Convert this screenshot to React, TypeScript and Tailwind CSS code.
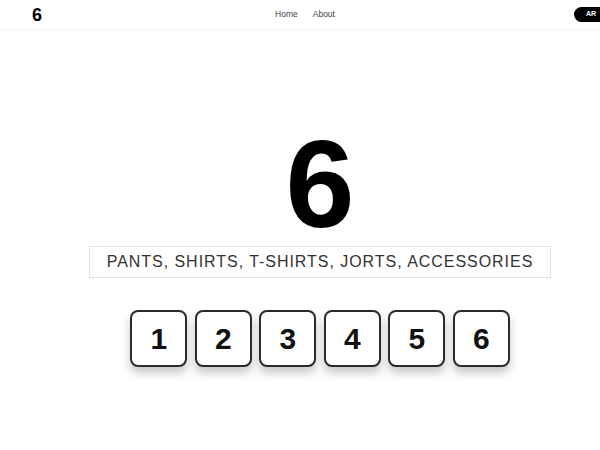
import React from "react";

export default function App() {
  const nums = [1, 2, 3, 4, 5, 6];
  return (
    <div className="w-[600px] h-[450px] overflow-hidden bg-white" style={{ fontFamily: '"Liberation Sans", Arial, sans-serif' }}>
      <div className="w-[640px]">
        <header className="h-[30px] border-b border-[#f1f1f1] flex items-center justify-between pl-[32px] pr-[32px]">
          <div className="text-[18px] font-bold text-black leading-none">6</div>
          <nav className="flex items-center gap-[15px] text-[8.5px] text-[#444] mr-[6px]">
            <span>Home</span>
            <span>About</span>
          </nav>
          <div className="h-[15px] w-[34px] rounded-full bg-black text-white text-[7px] font-bold flex items-center justify-center">AR</div>
        </header>
        <main className="flex flex-col items-center pt-[92px]">
          <div className="text-[124px] font-bold leading-none text-black">6</div>
          <div className="h-[32px] px-[17px] border border-[#e2e2e2] flex items-center text-[16px] tracking-[0.06em] text-[#333]">
            PANTS, SHIRTS, T-SHIRTS, JORTS, ACCESSORIES
          </div>
          <div className="flex gap-[7.5px] mt-[32px]">
            {nums.map((n) => (
              <div
                key={n}
                className="w-[57px] h-[57px] rounded-[8px] border-2 border-[#2b2b2b] bg-white flex items-center justify-center text-[30px] font-bold text-[#111] shadow-[0_6px_10px_rgba(0,0,0,0.22)]"
              >
                {n}
              </div>
            ))}
          </div>
        </main>
      </div>
    </div>
  );
}
